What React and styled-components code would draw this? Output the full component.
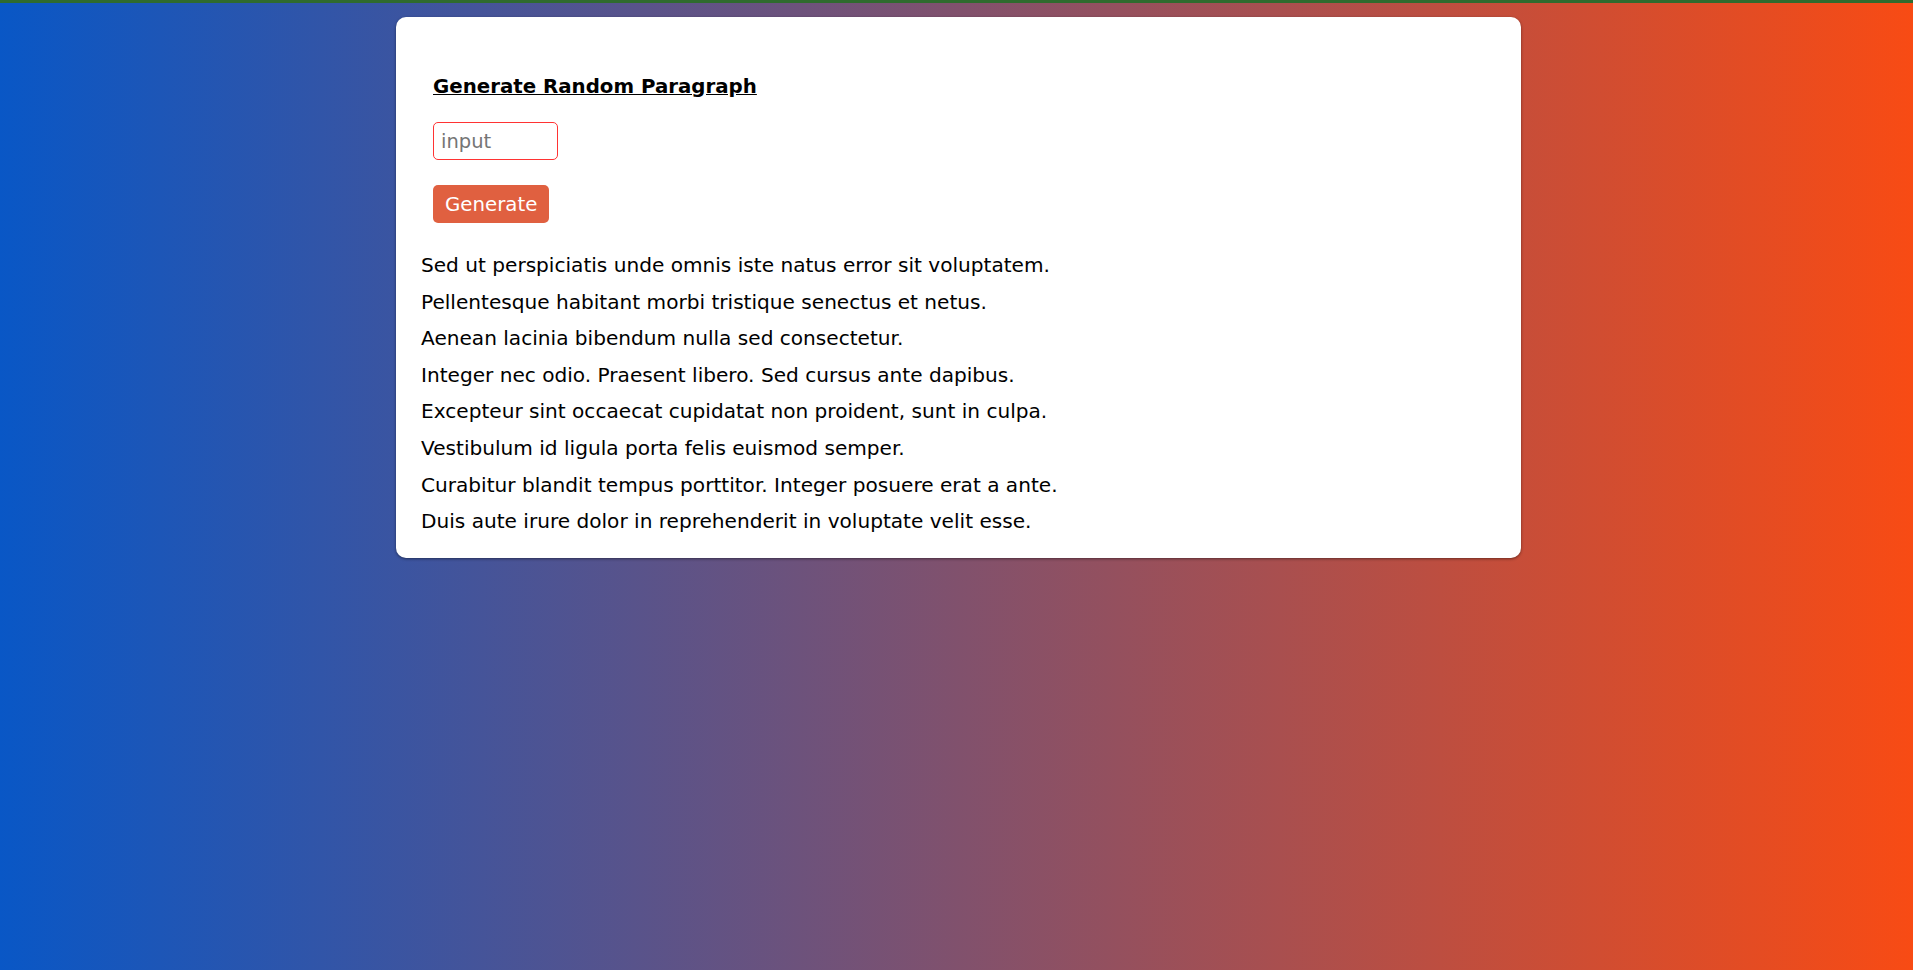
import React from 'react';
import styled, { createGlobalStyle } from 'styled-components';

const GlobalStyle = createGlobalStyle`
  html, body {
    margin: 0;
    padding: 0;
    height: 100%;
  }
  body {
    font-family: "DejaVu Sans", Verdana, sans-serif;
  }
`;

const Page = styled.div`
  min-height: 970px;
  box-sizing: border-box;
  border-top: 3px solid #2f6b2e;
  background: linear-gradient(to right, #0957c6, #f84b14);
  padding: 14px 0 0 4px;
`;

const Card = styled.div`
  width: 1125px;
  margin: 0 auto;
  box-sizing: border-box;
  background: #fff;
  border-radius: 10px;
  box-shadow: 0 1px 3px rgba(0, 0, 0, 0.45);
  padding: 40px 25px 18px;
`;

const Form = styled.div`
  padding: 0 12px;
  display: flex;
  flex-direction: column;
  align-items: flex-start;
`;

const Title = styled.h3`
  margin: 18px 0 24px;
  font-size: 19.8px;
  font-weight: 700;
  text-decoration: underline;
  color: #000;
`;

const Input = styled.input`
  width: 125px;
  height: 38px;
  box-sizing: border-box;
  border: 1px solid #f33;
  border-radius: 5px;
  padding: 0 7px;
  font-family: inherit;
  font-size: 19.5px;
  outline: none;
  &::placeholder {
    color: #757575;
  }
`;

const Button = styled.button`
  margin-top: 25px;
  height: 38px;
  padding: 0 12px;
  border: none;
  border-radius: 5px;
  background: #e06040;
  color: #fff;
  font-family: inherit;
  font-size: 19.8px;
  cursor: pointer;
`;

const Paragraph = styled.div`
  margin-top: 24px;
`;

const Line = styled.div`
  font-size: 20.1px;
  line-height: 36.6px;
  color: #000;
`;

const lines = [
  'Sed ut perspiciatis unde omnis iste natus error sit voluptatem.',
  'Pellentesque habitant morbi tristique senectus et netus.',
  'Aenean lacinia bibendum nulla sed consectetur.',
  'Integer nec odio. Praesent libero. Sed cursus ante dapibus.',
  'Excepteur sint occaecat cupidatat non proident, sunt in culpa.',
  'Vestibulum id ligula porta felis euismod semper.',
  'Curabitur blandit tempus porttitor. Integer posuere erat a ante.',
  'Duis aute irure dolor in reprehenderit in voluptate velit esse.',
];

const App = () => (
  <Page>
    <GlobalStyle />
    <Card>
      <Form>
        <Title>Generate Random Paragraph</Title>
        <Input placeholder="input" />
        <Button>Generate</Button>
      </Form>
      <Paragraph>
        {lines.map((line, index) => (
          <Line key={index}>{line}</Line>
        ))}
      </Paragraph>
    </Card>
  </Page>
);

export default App;
